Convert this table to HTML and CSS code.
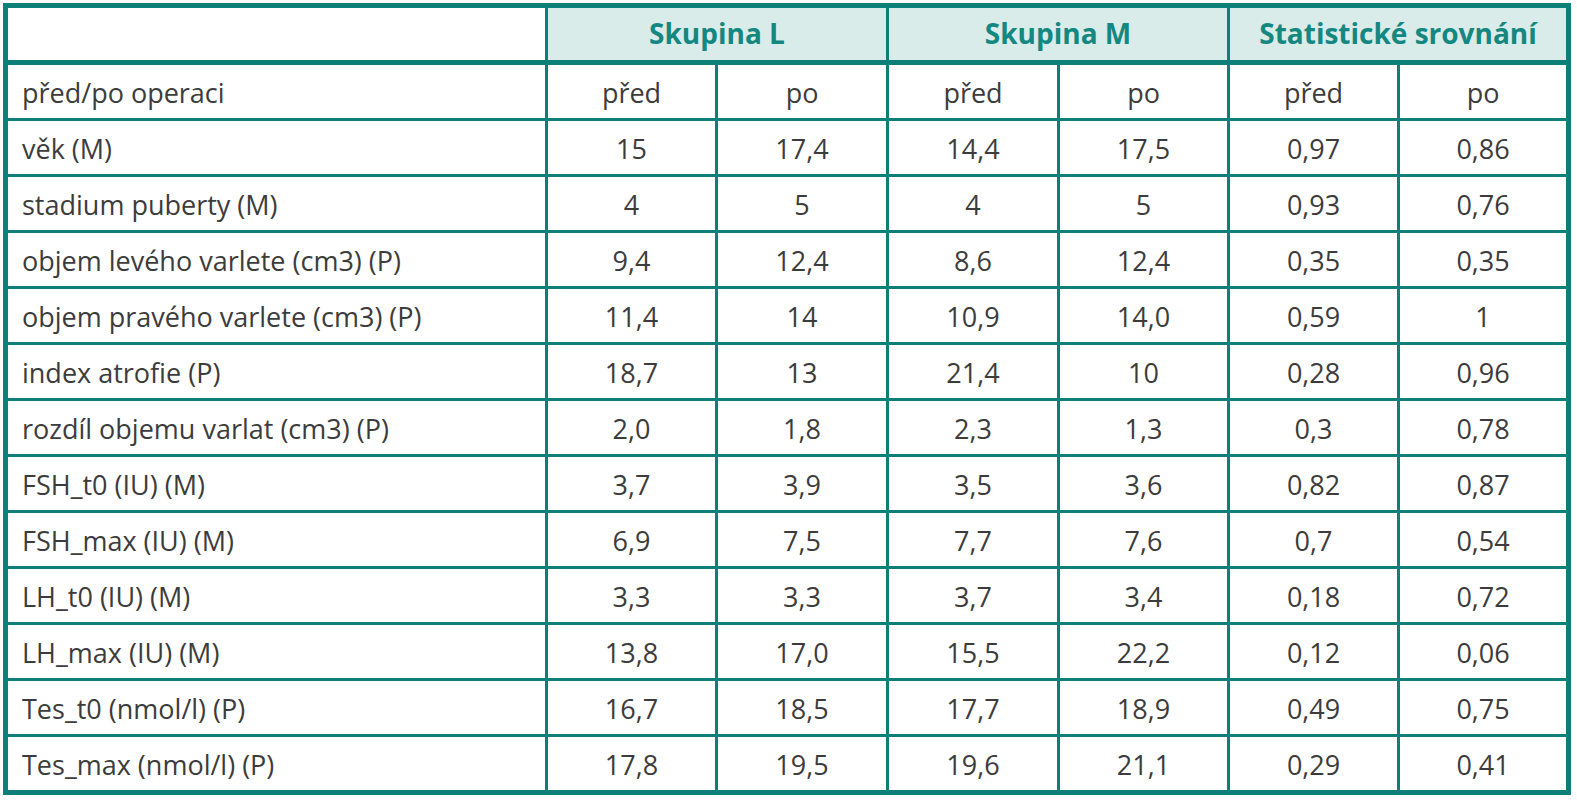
FILE: index.html
```html
<!DOCTYPE html>
<html lang="cs">
<head>
<meta charset="utf-8">
<title>Tabulka</title>
<link rel="stylesheet" href="styles.css">
</head>
<body>
<table class="data">
  <colgroup>
    <col class="c-label">
    <col class="c-a">
    <col class="c-b">
    <col class="c-b">
    <col class="c-a">
    <col class="c-a">
    <col class="c-last">
  </colgroup>
  <thead>
    <tr class="head">
      <th></th>
      <th colspan="2">Skupina L</th>
      <th colspan="2">Skupina M</th>
      <th colspan="2" class="last">Statistické srovnání</th>
    </tr>
  </thead>
  <tbody>
    <tr><td>před/po operaci</td><td>před</td><td>po</td><td>před</td><td>po</td><td>před</td><td>po</td></tr>
    <tr><td>věk (M)</td><td>15</td><td>17,4</td><td>14,4</td><td>17,5</td><td>0,97</td><td>0,86</td></tr>
    <tr><td>stadium puberty (M)</td><td>4</td><td>5</td><td>4</td><td>5</td><td>0,93</td><td>0,76</td></tr>
    <tr><td>objem levého varlete (cm3) (P)</td><td>9,4</td><td>12,4</td><td>8,6</td><td>12,4</td><td>0,35</td><td>0,35</td></tr>
    <tr><td>objem pravého varlete (cm3) (P)</td><td>11,4</td><td>14</td><td>10,9</td><td>14,0</td><td>0,59</td><td>1</td></tr>
    <tr><td>index atrofie (P)</td><td>18,7</td><td>13</td><td>21,4</td><td>10</td><td>0,28</td><td>0,96</td></tr>
    <tr><td>rozdíl objemu varlat (cm3) (P)</td><td>2,0</td><td>1,8</td><td>2,3</td><td>1,3</td><td>0,3</td><td>0,78</td></tr>
    <tr><td>FSH_t0 (IU) (M)</td><td>3,7</td><td>3,9</td><td>3,5</td><td>3,6</td><td>0,82</td><td>0,87</td></tr>
    <tr><td>FSH_max (IU) (M)</td><td>6,9</td><td>7,5</td><td>7,7</td><td>7,6</td><td>0,7</td><td>0,54</td></tr>
    <tr><td>LH_t0 (IU) (M)</td><td>3,3</td><td>3,3</td><td>3,7</td><td>3,4</td><td>0,18</td><td>0,72</td></tr>
    <tr><td>LH_max (IU) (M)</td><td>13,8</td><td>17,0</td><td>15,5</td><td>22,2</td><td>0,12</td><td>0,06</td></tr>
    <tr><td>Tes_t0 (nmol/l) (P)</td><td>16,7</td><td>18,5</td><td>17,7</td><td>18,9</td><td>0,49</td><td>0,75</td></tr>
    <tr class="final"><td>Tes_max (nmol/l) (P)</td><td>17,8</td><td>19,5</td><td>19,6</td><td>21,1</td><td>0,29</td><td>0,41</td></tr>
  </tbody>
</table>
</body>
</html>
```

FILE: styles.css
```css
html, body {
  margin: 0;
  padding: 0;
  background: #ffffff;
}

body {
  padding: 3px 0 0 3px;
  font-family: "Open Sans", "Noto Sans", "Liberation Sans", sans-serif;
  color: #3c3c3c;
}

.data {
  width: 1568px;
  table-layout: fixed;
  border-collapse: separate;
  border-spacing: 0;
  border: 5px solid #0b7f78;
}

.c-label { width: 540px; }
.c-a { width: 170px; }
.c-b { width: 171px; }
.c-last { width: 166px; }

.data th,
.data td {
  padding: 0;
  border-right: 3px solid #0b7f78;
  border-bottom: 3px solid #0b7f78;
  text-align: center;
  line-height: 1;
  box-sizing: border-box;
  white-space: nowrap;
}

.data td:last-child,
.data th.last {
  border-right: none;
}

.data .head th {
  height: 57px;
  border-bottom: 5px solid #0b7f78;
  background: #d9ecea;
  color: #138780;
  font-weight: 700;
  font-size: 28px;
  padding-bottom: 2px;
}

.data .head th:first-child {
  background: #ffffff;
}

.data tbody td {
  height: 56px;
  font-size: 27px;
  font-weight: 400;
  letter-spacing: 0;
  padding-top: 1px;
}

.data tr.final td {
  border-bottom: none;
  height: 53px;
}

.data tbody td:first-child {
  text-align: left;
  padding-left: 14px;
}
```
